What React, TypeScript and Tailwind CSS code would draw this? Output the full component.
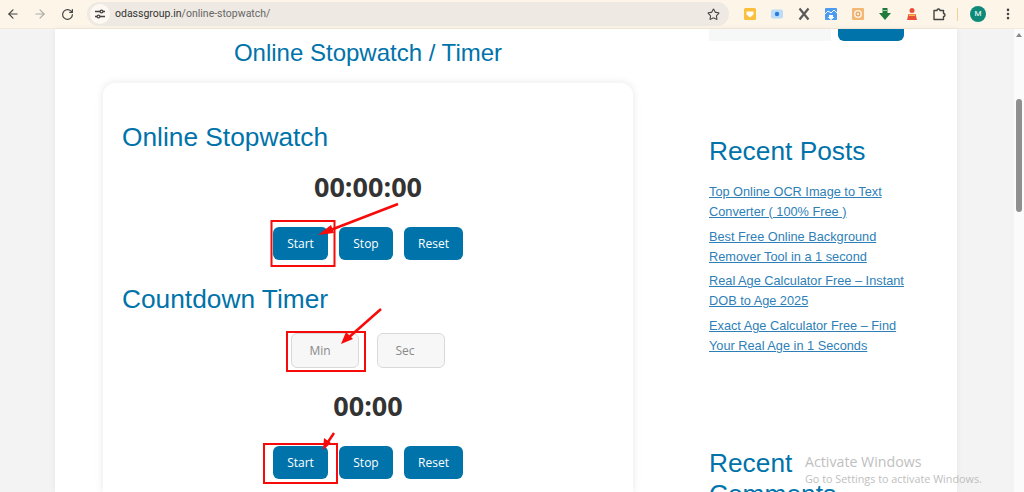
import { ArrowLeft, ArrowRight, RotateCw, Star, EllipsisVertical } from "lucide-react";

const heading = "font-['Liberation_Sans',sans-serif] text-[#0073aa]";
const ui = "font-['Open_Sans',sans-serif]";

function Btn({ label }: { label: string }) {
  return (
    <button className={`h-[33px] rounded-[6px] bg-[#0073aa] text-white text-[12px] ${ui} ${label === "Reset" ? "w-[59px]" : label === "Start" ? "w-[55px]" : "w-[54px]"}`}>
      {label}
    </button>
  );
}

function Buttons() {
  return (
    <div className="flex justify-center gap-[11px]">
      <Btn label="Start" />
      <Btn label="Stop" />
      <Btn label="Reset" />
    </div>
  );
}

function Field({ label }: { label: string }) {
  return (
    <div className={`w-[68px] h-[35px] rounded-[6px] border border-[#d9d9d9] bg-[#f7f7f7] text-[#8a8a8a] text-[12px] flex items-center pl-[18px] ${ui}`}>
      {label}
    </div>
  );
}

function Icon({ children }: { children: React.ReactNode }) {
  return <svg width="14" height="14" viewBox="0 0 14 14" className="shrink-0">{children}</svg>;
}

const links = [
  "Top Online OCR Image to Text Converter ( 100% Free )",
  "Best Free Online Background Remover Tool in a 1 second",
  "Real Age Calculator Free – Instant DOB to Age 2025",
  "Exact Age Calculator Free – Find Your Real Age in 1 Seconds",
];

export default function App() {
  return (
    <div className="relative w-[1024px] h-[492px] overflow-hidden bg-[#f3f3f3] flex flex-col">
      <header className="h-[29px] shrink-0 bg-[#fdf5e8] border-b border-[#f3ead9] flex items-center text-[#444] pl-[6px]">
        <ArrowLeft size={14} strokeWidth={2} />
        <ArrowRight size={14} strokeWidth={2} className="ml-[13px] text-[#aaa]" />
        <RotateCw size={13} strokeWidth={2.2} className="ml-[14px]" />
        <div className="ml-[13px] w-[642px] h-[24px] rounded-full bg-[#eee9e2] flex items-center pl-[3px]">
          <div className="w-[20px] h-[20px] rounded-full bg-[#fdf9f2] flex items-center justify-center">
            <svg width="12" height="12" viewBox="0 0 12 12" fill="none" stroke="#444" strokeWidth="1.300">
              <path d="M1 3.500h5M9 3.500h2M1 8.500h2M6 8.500h5" />
              <circle cx="7.500" cy="3.500" r="1.400" />
              <circle cx="4.500" cy="8.500" r="1.400" />
            </svg>
          </div>
          <span className="ml-[5px] text-[10.500px] text-[#333] font-['Roboto',sans-serif]">
            odassgroup.in<span className="text-[#666]">/online-stopwatch/</span>
          </span>
          <Star size={13} strokeWidth={2} className="ml-auto mr-[9px]" />
        </div>
        <div className="ml-[14px] flex items-center gap-[13px]">
          <Icon><rect x="1" y="1" width="12" height="12" rx="1.500" fill="#fbbf3c" /><path d="M3.500 4.500h7v3l-3.500 3-3.500-3z" fill="#fff" /></Icon>
          <Icon><rect x="1" y="2.500" width="12" height="9" rx="2" fill="#bcdcf8" /><circle cx="7" cy="7" r="2.200" fill="#2a7ddc" /></Icon>
          <Icon><path d="M2.500 1.500L11.500 12.500M11.500 1.500L2.500 12.500" stroke="#5a5a5a" strokeWidth="2.200" fill="none" /></Icon>
          <Icon><rect x="1" y="1" width="12" height="12" rx="1" fill="#4b9cf0" /><path d="M1 7l3-3 3 2 3-3 3 3" stroke="#fff" strokeWidth="1" fill="none" /><path d="M5 8h4v2h1.500L7 13l-3.500-3H5z" fill="#fff" /></Icon>
          <Icon><rect x="1" y="1" width="12" height="12" rx="1" fill="#f3b873" /><circle cx="7" cy="7" r="4" fill="#fdf0de" /><circle cx="7" cy="7" r="2" fill="none" stroke="#e58a3c" /></Icon>
          <Icon><path d="M4.500 1h5v5H13l-6 7-6-7h3.500z" fill="#1f7a3c" /><path d="M5 3.500h4" stroke="#8fd19e" strokeWidth="1" /></Icon>
          <Icon><circle cx="7" cy="3.500" r="2.500" fill="#e8503a" /><path d="M3.500 7h7l1.500 6H2z" fill="#e8503a" /><rect x="4" y="7.500" width="6" height="1.500" fill="#f8c14a" /></Icon>
          <Icon><path d="M2 3.500h3a1.500 1.500 0 0 1 3 0h3.500V6.500a1.500 1.500 0 0 1 0 3V12.500H2z" fill="none" stroke="#444" strokeWidth="1.400" strokeLinejoin="round" /></Icon>
        </div>
        <div className="ml-[11px] w-px h-[13px] bg-[#f0cf95]" />
        <div className="ml-[12px] w-[16px] h-[16px] rounded-full bg-[#0f8a78] text-white text-[8px] flex items-center justify-center font-['Roboto',sans-serif]">M</div>
        <EllipsisVertical size={14} strokeWidth={2.5} className="ml-[15px]" />
      </header>

      <div className="flex-1 min-h-0 flex pl-[55px]">
        <main className="w-[902px] bg-white flex pl-[48px] shadow-[0_0_6px_rgba(0,0,0,0.06)]">
          <div className="w-[530px] flex flex-col">
            <h1 className={`${heading} text-[24px] leading-[28px] text-center mt-[10px]`}>Online Stopwatch / Timer</h1>
            <section className="mt-[16px] flex-1 rounded-t-[12px] bg-white shadow-[0_0_8px_rgba(0,0,0,0.1)] px-[19px] pt-[39px]">
              <h2 className={`${heading} text-[26.300px] leading-[30px]`}>Online Stopwatch</h2>
              <div className={`${ui} font-bold text-[27px] leading-[38px] text-[#333] text-center mt-[16px]`}>00:00:00</div>
              <div className="mt-[21px]"><Buttons /></div>
              <h2 className={`${heading} text-[26.300px] leading-[30px] mt-[24px]`}>Countdown Timer</h2>
              <div className="mt-[19px] flex justify-center items-center gap-[18px] pr-[1px]">
                <Field label="Min" />
                <Field label="Sec" />
              </div>
              <div className={`${ui} font-bold text-[27px] leading-[36px] text-[#333] text-center mt-[20px]`}>00:00</div>
              <div className="mt-[22px]"><Buttons /></div>
            </section>
          </div>
          <aside className="ml-[76px] w-[196px] flex flex-col">
            <div className="flex shrink-0 h-[12px] gap-[7px]">
              <div className="w-[122px] bg-[#f6f7f7]" />
              <div className="w-[66px] bg-[#0073aa] rounded-b-[6px]" />
            </div>
            <h2 className={`${heading} text-[26.300px] leading-[30px] mt-[95px]`}>Recent Posts</h2>
            <ul className="mt-[16px] flex flex-col gap-[4.700px] font-['Liberation_Sans',sans-serif] text-[12.750px] leading-[20px] text-[#2e7fb8] underline">
              {links.map((l) => <li key={l}>{l}</li>)}
            </ul>
            <h2 className={`${heading} text-[26.300px] leading-[31px] mt-[92px]`}>Recent Comments</h2>
          </aside>
        </main>
        <div className="ml-auto w-[10px] bg-[#fbfbfb] flex flex-col items-center">
          <div className="mt-[4px] w-0 h-0 border-x-[3px] border-x-transparent border-b-[4px] border-b-[#888]" />
          <div className="mt-[62px] w-[6px] h-[113px] rounded-full bg-[#8f8f8f]" />
        </div>
      </div>

      <svg className="absolute inset-0 pointer-events-none" width="1024" height="492" viewBox="0 0 1024 492">
        <g fill="none" stroke="#f60a0a" strokeWidth="2">
          <rect x="271.500" y="221" width="63" height="45" />
          <rect x="287" y="332" width="78" height="39" />
          <rect x="264" y="444" width="73" height="39" />
        </g>
        <g fill="none" stroke="#f60a0a" strokeWidth="2.500">
          <path d="M398 204 L328 231" />
          <path d="M381 309 L347 339" />
          <path d="M334 433 L326 445" />
        </g>
        <g fill="#f60a0a">
          <path d="M318 235 L331 225 L334 233 Z" />
          <path d="M341 344 L346 332 L353 339 Z" />
          <path d="M323 450 L324 438 L331 443 Z" />
        </g>
      </svg>

      <div className="absolute left-[805px] top-[453px] font-['Open_Sans',sans-serif] text-[#b9b9b9] opacity-90 pointer-events-none">
        <div className="text-[14.200px] leading-[18px]">Activate Windows</div>
        <div className="text-[10.800px] leading-[14px] mt-[1px]">Go to Settings to activate Windows.</div>
      </div>
    </div>
  );
}
